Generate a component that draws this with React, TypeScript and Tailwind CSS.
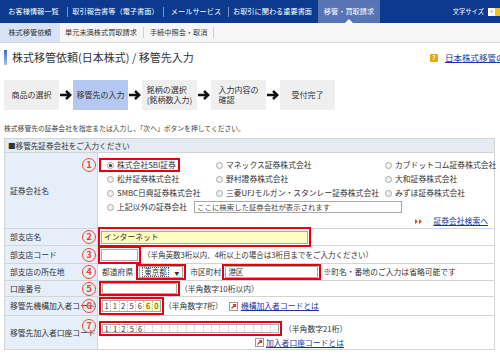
import React from "react";

// circled step number laid over the label column
function Num({ n, pos }: { n: string; pos: string }) {
  return (
    <span
      className={`absolute right-[1px] flex h-[14px] w-[14px] items-center justify-center rounded-full border-[1.5px] border-[#ea4a2b] text-[9.5px] font-bold leading-none text-[#ea4a2b] ${pos}`}
    >
      {n}
    </span>
  );
}

function Radio({ checked }: { checked?: boolean }) {
  return (
    <span className="flex h-[7px] w-[7px] shrink-0 items-center justify-center rounded-full border border-[#a9a9a9] bg-[#f1f1f1]">
      {checked && <span className="h-[3px] w-[3px] rounded-full bg-[#333]" />}
    </span>
  );
}

function Row({
  label,
  num,
  numPos = "top-1/2 -translate-y-1/2",
  h,
  children,
}: {
  label: string;
  num: string;
  numPos?: string;
  h: string;
  children: React.ReactNode;
}) {
  return (
    <div className={`flex border-b border-[#d4d4d4] ${h}`}>
      <div className="relative flex w-[93px] shrink-0 items-center border-r border-[#d4d4d4] bg-[#e6eef9] pl-[5px] whitespace-nowrap">
        {label}
        <Num n={num} pos={numPos} />
      </div>
      <div className="flex min-w-0 flex-1 items-center whitespace-nowrap">{children}</div>
    </div>
  );
}

function LinkIcon() {
  return (
    <svg width="9" height="9" viewBox="0 0 9 9" className="shrink-0">
      <rect x="0.5" y="0.5" width="8" height="8" fill="#fff" stroke="#9a9a9a" />
      <path d="M2.5 6.5 L6.5 2.5 M4 2.5 H6.5 V5" stroke="#e0301e" strokeWidth="1.2" fill="none" />
    </svg>
  );
}

function Digits({ values, count, yellowFrom }: { values: string[]; count: number; yellowFrom?: number }) {
  return (
    <div className="flex h-full w-full border border-[#a8a8a8] bg-white">
      {Array.from({ length: count }).map((_, i) => (
        <span
          key={i}
          className={`flex flex-1 items-center justify-center text-[7.5px] leading-none ${
            i < count - 1 ? "border-r border-dotted border-[#b9c4d6]" : ""
          } ${yellowFrom !== undefined && i >= yellowFrom ? "bg-[#ffffb4]" : ""}`}
        >
          {values[i] ?? ""}
        </span>
      ))}
    </div>
  );
}

const steps = [
  { t: ["商品の選択"] },
  { t: ["移管先の入力"], active: true },
  { t: ["銘柄の選択", "(銘柄数入力)"] },
  { t: ["入力内容の", "確認"] },
  { t: ["受付完了"] },
];

const companies = [
  ["株式会社SBI証券", "マネックス証券株式会社", "カブドットコム証券株式会社"],
  ["松井証券株式会社", "野村證券株式会社", "大和証券株式会社"],
  ["SMBC日興証券株式会社", "三菱UFJモルガン・スタンレー証券株式会社", "みずほ証券株式会社"],
];

export default function App() {
  return (
    <div className="h-[361px] w-[500px] overflow-hidden bg-white font-['Noto_Sans_CJK_JP','Noto_Sans',sans-serif] text-[#333]">
      {/* global nav */}
      <div className="flex h-[23px] items-center bg-[#0c3a8f] text-[7.2px] text-white whitespace-nowrap">
        <div className="flex h-full w-[67px] items-center justify-center">お客様情報一覧</div>
        <span className="h-[10px] w-px bg-[#7d93c4]" />
        <div className="flex h-full w-[95px] items-center justify-center">取引報告書等（電子書面）</div>
        <span className="h-[10px] w-px bg-[#7d93c4]" />
        <div className="flex h-full w-[64px] items-center justify-center">メールサービス</div>
        <span className="h-[10px] w-px bg-[#7d93c4]" />
        <div className="flex h-full w-[87px] items-center justify-center">お取引に関わる重要書面</div>
        <div className="relative ml-[2px] flex h-full w-[62px] items-center justify-center bg-[#5674b6]">
          移管・買取請求
          <span className="absolute bottom-0 left-1/2 h-0 w-0 -translate-x-1/2 border-x-[4px] border-b-[4px] border-x-transparent border-b-white" />
        </div>
        <div className="flex-1" />
        <span className="text-[6.3px]">文字サイズ</span>
        <span className="ml-[4px] flex h-[8px] w-[7px] items-center justify-center bg-white text-[7px] leading-none text-[#999]">+</span>
        <span className="h-[8px] w-[5px] bg-[#f3c21a]" />
      </div>

      {/* sub nav */}
      <div className="flex h-[20px] items-center border-b border-[#d9d9d9] bg-[#f6f6f6] text-[7.2px] whitespace-nowrap">
        <div className="flex h-full w-[60px] items-center justify-center bg-[#d7e3f4]">株式移管依頼</div>
        <div className="flex h-full items-center pl-[5px] pr-[6px]">単元未満株式買取請求</div>
        <span className="h-[11px] w-px bg-[#cfcfcf]" />
        <div className="flex h-full items-center pl-[6px] pr-[6px]">手続中照会・取消</div>
        <span className="h-[11px] w-px bg-[#cfcfcf]" />
      </div>

      <div className="px-[4px]">
        {/* title */}
        <div className="mt-[7px] flex h-[15px] items-center whitespace-nowrap">
          <div className="flex w-[426px] shrink-0 items-center">
            <span className="h-[15px] w-[3px] bg-linear-to-b from-[#2c6ad0] to-[#a3c4f2]" />
            <span className="ml-[5px] text-[11px] leading-none text-[#333]">株式移管依頼(日本株式) / 移管先入力</span>
          </div>
          <span className="flex h-[8px] w-[8px] shrink-0 items-center justify-center rounded-[1px] bg-[#e7a413] text-[6.5px] font-bold leading-none text-white">?</span>
          <span className="ml-[7px] shrink-0 text-[8.5px] text-[#1b34a3] underline">日本株式移管のご案内</span>
        </div>

        {/* steps */}
        <div className="mt-[15px] flex h-[30px] items-center">
          {steps.map((s, i) => (
            <React.Fragment key={i}>
              <div
                className={`flex h-[30px] w-[55px] items-center justify-center text-[8px] leading-[10px] text-[#333] whitespace-nowrap ${
                  s.active ? "bg-[#b4c8f1]" : "bg-[#efefef]"
                }`}
              >
                <div>
                  {s.t.map((l) => (
                    <div key={l}>{l}</div>
                  ))}
                </div>
              </div>
              {i < steps.length - 1 && (
                <div className="flex w-[14px] justify-center">
                  <svg width="12" height="10" viewBox="0 0 12 10">
                    <path d="M0 5 H10 M6 1 L10.3 5 L6 9" stroke="#111" strokeWidth="2.4" fill="none" />
                  </svg>
                </div>
              )}
            </React.Fragment>
          ))}
        </div>

        {/* description */}
        <div className="mt-[13px] h-[10px] text-[6.8px] leading-[10px] text-[#444] whitespace-nowrap">
          株式移管先の証券会社を指定または入力し、「次へ」ボタンを押してください。
        </div>

        {/* form table */}
        <div className="mt-[5px] w-[491px] border-x border-t border-[#d4d4d4] text-[7.8px] text-[#333]">
          <div className="flex h-[14px] items-center border-b border-[#d4d4d4] bg-[#e4ebf3] pl-[3px] text-[7.6px]">
            ■移管先証券会社をご入力ください
          </div>

          <Row label="証券会社名" num="1" numPos="top-[5px]" h="h-[76px]">
            <div className="flex h-full w-full flex-col pl-[9px] pt-[5px]">
              {companies.map((row, r) => (
                <div key={r} className="grid h-[14px] grid-cols-[109px_169px_1fr] items-center">
                  {row.map((c, ci) =>
                    r === 0 && ci === 0 ? (
                      <div key={c} className="-ml-[8px] flex h-[14px] w-fit items-center gap-[3px] border-2 border-[#e60012] pl-[6px] pr-[2px]">
                        <Radio checked />
                        <span>{c}</span>
                      </div>
                    ) : (
                      <div key={c} className="flex items-center gap-[3px]">
                        <Radio />
                        <span>{c}</span>
                      </div>
                    )
                  )}
                </div>
              ))}
              <div className="flex h-[14px] items-center gap-[3px]">
                <Radio />
                <span>上記以外の証券会社</span>
                <div className="ml-[4px] flex h-[12px] w-[208px] items-center border border-[#a9a9a9] bg-white pl-[2px] text-[7.4px] text-[#444]">
                  ここに検索した証券会社が表示されます
                </div>
              </div>
              <div className="flex h-[14px] items-center justify-end pr-[6px]">
                <svg width="8" height="5" viewBox="0 0 8 5" className="mr-[10px]">
                  <path d="M0 0 L3 2.5 L0 5 Z M4 0 L7 2.5 L4 5 Z" fill="#ec4a19" />
                </svg>
                <span className="text-[#1b34a3] underline">証券会社検索へ</span>
              </div>
            </div>
          </Row>

          <Row label="部支店名" num="2" h="h-[17px]">
            <div className="flex h-[20px] w-[213px] items-center border-2 border-[#e60012] px-[1px]">
              <div className="flex h-[13px] w-full items-center border border-[#a9a9a9] bg-[#ffffc2] pl-[2px]">インターネット</div>
            </div>
          </Row>

          <Row label="部支店コード" num="3" h="h-[18px]">
            <div className="flex h-[18px] w-[43px] items-center border-2 border-[#e60012] px-[1px]">
              <div className="h-[12px] w-full border border-[#a9a9a9] bg-white" />
            </div>
            <span className="ml-[2px] text-[7.5px]">（半角英数3桁以内、4桁以上の場合は3桁目までをご入力ください）</span>
          </Row>

          <Row label="部支店の所在地" num="4" h="h-[17px]">
            <span className="ml-[4px]">都道府県</span>
            <div className="ml-[3px] flex h-[16px] w-[50px] items-center border-2 border-[#e60012] px-[1px]">
              <div className="flex h-[12px] w-full items-center justify-between border border-[#a9a9a9] bg-white pl-[2px] pr-[3px]">
                <span className="border border-dotted border-[#555] px-[1px] text-[7.5px] leading-[8px]">東京都</span>
                <span className="text-[5px] leading-none">▼</span>
              </div>
            </div>
            <span className="ml-[4px]">市区町村</span>
            <div className="ml-[1px] flex h-[16px] w-[99px] items-center border-2 border-[#e60012] px-[1px]">
              <div className="flex h-[12px] w-full items-center border border-[#a9a9a9] bg-white pl-[2px] text-[7.5px]">港区</div>
            </div>
            <span className="ml-[2px]">※町名・番地のご入力は省略可能です</span>
          </Row>

          <Row label="口座番号" num="5" h="h-[16px]">
            <div className="ml-[1px] flex h-[15px] w-[81px] items-center border-2 border-[#e60012] px-[1px]">
              <div className="h-[11px] w-full border border-[#a9a9a9] bg-white" />
            </div>
            <span>（半角数字10桁以内）</span>
          </Row>

          <Row label="移管先機構加入者コード" num="6" h="h-[19px]">
            <div className="ml-[1px] flex h-[18px] w-[65px] items-center border-2 border-[#e60012] px-[1px] py-[1px]">
              <Digits values={["1", "1", "2", "5", "6", "6", "0"]} count={7} yellowFrom={5} />
            </div>
            <span>（半角数字7桁）</span>
            <span className="ml-[6px]">
              <LinkIcon />
            </span>
            <span className="ml-[3px] text-[#1b34a3] underline">機構加入者コードとは</span>
          </Row>

          <Row label="移管先加入者口座コード" num="7" numPos="top-[3px]" h="h-[34px]">
            <div className="flex h-full flex-col pt-[5px]">
              <div className="flex items-center">
                <div className="ml-[1px] flex h-[15px] w-[183px] items-center border-2 border-[#e60012] px-[1px] py-[1px]">
                  <Digits values={["1", "1", "2", "5", "6"]} count={21} />
                </div>
                <span className="ml-[2px]">（半角数字21桁）</span>
              </div>
              <div className="mt-[1px] ml-[157px] flex items-center gap-[2px]">
                <LinkIcon />
                <span className="text-[#1b34a3] underline">加入者口座コードとは</span>
              </div>
            </div>
          </Row>
        </div>
      </div>
    </div>
  );
}
